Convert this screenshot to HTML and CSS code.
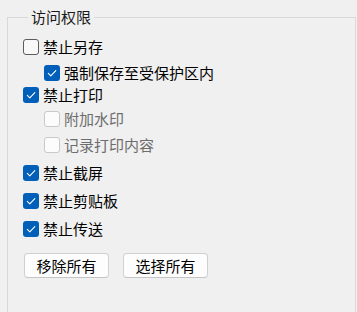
FILE: index.html
```html
<!DOCTYPE html>
<html lang="zh-CN">
<head>
<meta charset="utf-8">
<link rel="stylesheet" href="styles.css">
</head>
<body>
<fieldset class="group">
  <legend class="title">访问权限</legend>
  <div class="row r1"><span class="box"></span><span class="label">禁止另存</span></div>
  <div class="row r2 sub"><span class="box on"><svg viewBox="0 0 16 16"><path d="M4.3 8.4 L6.8 10.9 L11.8 5.6"/></svg></span><span class="label">强制保存至受保护区内</span></div>
  <div class="row r3"><span class="box on"><svg viewBox="0 0 16 16"><path d="M4.3 8.4 L6.8 10.9 L11.8 5.6"/></svg></span><span class="label">禁止打印</span></div>
  <div class="row r4 sub"><span class="box off"></span><span class="label dim">附加水印</span></div>
  <div class="row r5 sub"><span class="box off"></span><span class="label dim">记录打印内容</span></div>
  <div class="row r6"><span class="box on"><svg viewBox="0 0 16 16"><path d="M4.3 8.4 L6.8 10.9 L11.8 5.6"/></svg></span><span class="label">禁止截屏</span></div>
  <div class="row r7"><span class="box on"><svg viewBox="0 0 16 16"><path d="M4.3 8.4 L6.8 10.9 L11.8 5.6"/></svg></span><span class="label">禁止剪贴板</span></div>
  <div class="row r7"><span class="box on"><svg viewBox="0 0 16 16"><path d="M4.3 8.4 L6.8 10.9 L11.8 5.6"/></svg></span><span class="label">禁止传送</span></div>
  <div class="buttons">
    <button class="btn">移除所有</button>
    <button class="btn">选择所有</button>
  </div>
</fieldset>
</body>
</html>
```
FILE: styles.css
```css
html, body {
  margin: 0;
  padding: 0;
  background: #f0f0f0;
  overflow: hidden;
  width: 357px;
  height: 312px;
}
body {
  font-family: "Noto Sans CJK SC", "Noto Sans", sans-serif;
  font-size: 15px;
  color: #000;
}
.group {
  margin: 7px 1px 0 7px;
  padding: 12px 0 0 15px;
  border: 1px solid #d9d9d9;
  border-bottom: none;
  height: 305px;
  box-sizing: border-box;
  min-inline-size: 0;
}
.title {
  padding: 0 3px;
  margin-left: 5px;
  height: 20px;
  line-height: 20px;
  font-size: 15px;
  color: #1a1a1a;
}
.row {
  display: flex;
  align-items: center;
  height: 16px;
  gap: 4px;
}
.sub { margin-left: 21px; }
.r2 { margin-top: 10px; }
.r3 { margin-top: 6px; }
.r4 { margin-top: 8px; }
.r5 { margin-top: 10px; }
.r6 { margin-top: 12px; }
.r7 { margin-top: 12px; }
.box {
  width: 16px;
  height: 16px;
  box-sizing: border-box;
  border: 1px solid #5c5c5c;
  border-radius: 3px;
  background: #f8f8f8;
  flex: none;
  display: block;
}
.box.off {
  border-color: #c9c9c9;
  background: #fcfcfc;
}
.box.on {
  border: none;
  background: #005fb8;
}
.box svg {
  width: 16px;
  height: 16px;
  display: block;
}
.box svg path {
  fill: none;
  stroke: #ffffff;
  stroke-width: 1.1;
  stroke-linecap: round;
  stroke-linejoin: round;
}
.label {
  line-height: 16px;
  white-space: nowrap;
}
.label.dim { color: #6d6d6d; }
.buttons {
  display: flex;
  gap: 14px;
  margin-top: 16px;
  margin-left: 1px;
}
.btn {
  width: 85px;
  height: 25px;
  box-sizing: border-box;
  border: 1px solid #d0d0d0;
  border-bottom-color: #c4c4c4;
  border-radius: 4px;
  background: #fdfdfd;
  font-family: "Noto Sans CJK SC", "Noto Sans", sans-serif;
  font-size: 15px;
  color: #000;
  padding: 0;
  line-height: 23px;
}
```
